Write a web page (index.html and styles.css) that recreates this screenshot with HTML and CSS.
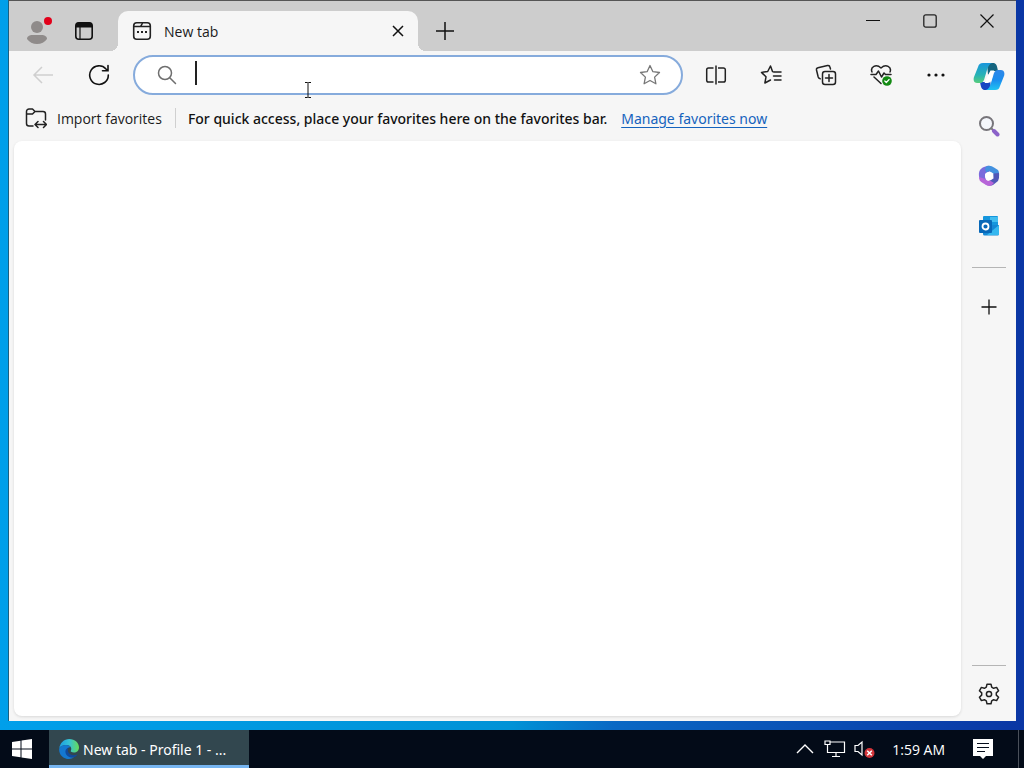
FILE: index.html
```html
<!DOCTYPE html>
<html lang="en">
<head>
  <meta charset="UTF-8" />
  <meta name="viewport" content="width=device-width, initial-scale=1.0"/>
  <title>New tab</title>
  <link rel="stylesheet" href="styles.css">
</head>
<body>
  <div class="desktop">
    <div class="window">
      <header class="tab-strip">
        <button class="strip-btn profile" aria-label="Profile">
          <svg width="28" height="28" viewBox="0 0 28 28">
            <circle cx="13" cy="10" r="6" fill="#8f8b8a"/>
            <path d="M3 22c0-3 3-4 5-4h10c2 0 5 1 5 4-2 3-6 5-10 5s-8-2-10-5z" fill="#8f8b8a"/>
            <circle cx="24" cy="4" r="4" fill="#e2001a"/>
          </svg>
        </button>
        <button class="strip-btn" aria-label="Tab actions">
          <svg width="20" height="20" viewBox="0 0 20 20">
            <rect x="1.8" y="1.8" width="16.4" height="16.4" rx="3" fill="none" stroke="#111" stroke-width="1.6"/>
            <path d="M2 6.5V4a2.5 2.5 0 0 1 2.5-2.5h11A2.5 2.5 0 0 1 18 4v2.5z" fill="#111"/>
            <path d="M6 6v12" stroke="#111" stroke-width="1.2"/>
          </svg>
        </button>
        <div class="tab">
          <svg width="20" height="20" viewBox="0 0 20 20" fill="none" stroke="#222" stroke-width="1.6">
            <rect x="1.7" y="1.7" width="16.6" height="16.6" rx="3"/>
            <path d="M2 5.5h6c2 0 1.5-3.5 3-3.5M8 5.5h10"/>
            <path d="M5 11h2M9 11h2M13 11h2" stroke-width="2"/>
          </svg>
          <span class="tab-title">New tab</span>
          <button class="tab-close" aria-label="Close tab">
            <svg width="12" height="12" viewBox="0 0 12 12" stroke="#111" stroke-width="1.5"><path d="M1 1l10 10M11 1L1 11"/></svg>
          </button>
        </div>
        <button class="new-tab" aria-label="New tab">
          <svg width="18" height="18" viewBox="0 0 18 18" stroke="#111" stroke-width="1.5"><path d="M9 0v18M0 9h18"/></svg>
        </button>
        <div class="window-controls">
          <button aria-label="Minimize"><svg width="14" height="14" viewBox="0 0 14 14" stroke="#111"><path d="M0 6.5h14"/></svg></button>
          <button aria-label="Maximize"><svg width="14" height="14" viewBox="0 0 14 14" fill="none" stroke="#222" stroke-width="1.3"><rect x="0.8" y="0.8" width="12.4" height="12.4" rx="2"/></svg></button>
          <button aria-label="Close"><svg width="14" height="14" viewBox="0 0 14 14" stroke="#111" stroke-width="1.2"><path d="M0.5 0.5l13 13M13.5 0.5l-13 13"/></svg></button>
        </div>
      </header>

      <div class="content">
        <main class="main">
          <div class="toolbar">
            <button class="nav-btn" aria-label="Back" disabled>
              <svg width="22" height="20" viewBox="0 0 22 20" fill="none" stroke="#cfcfcf" stroke-width="1.5"><path d="M21 10H2.5M10 2l-8 8 8 8"/></svg>
            </button>
            <button class="nav-btn" aria-label="Refresh">
              <svg width="22" height="22" viewBox="0 0 22 22" fill="none" stroke="#111" stroke-width="1.6" stroke-linecap="round"><path d="M20.3 11A9.3 9.3 0 1 1 18 5l1.5 1.5M20 1.5v5.2h-5.5"/></svg>
            </button>
            <form class="address">
              <svg width="20" height="20" viewBox="0 0 20 20" fill="none" stroke="#6e6e6e" stroke-width="1.5" stroke-linecap="round"><circle cx="8" cy="8" r="6.5"/><path d="M13 13l5.5 5.5"/></svg>
              <span class="field">
                <input type="text" aria-label="Address and search bar">
                <span class="caret"></span>
              </span>
              <button type="button" class="star" aria-label="Add to favorites">
                <svg width="22" height="22" viewBox="0 0 22 22" fill="none" stroke="#777" stroke-width="1.3" stroke-linejoin="round"><path d="M11 1.5l2.9 6.2 6.6.8-4.9 4.6 1.3 6.7L11 16.500l-5.900 3.300 1.300-6.700-4.900-4.600 6.600-.8z"/></svg>
              </button>
            </form>
            <button class="tool-btn" aria-label="Split screen">
              <svg width="22" height="22" viewBox="0 0 22 22" fill="none" stroke="#222" stroke-width="1.5"><path d="M8.5 4H3.5A1.8 1.8 0 0 0 1.7 5.8v10.4A1.8 1.8 0 0 0 3.5 18h5M13 4h5.5a1.8 1.8 0 0 1 1.8 1.8v10.4a1.8 1.8 0 0 1-1.8 1.8H13M11 1.5v19"/></svg>
            </button>
            <button class="tool-btn" aria-label="Favorites">
              <svg width="22" height="22" viewBox="0 0 22 22" fill="none" stroke="#222" stroke-width="1.5" stroke-linejoin="round" stroke-linecap="round"><path d="M14 8l-1.5-.4L10.5 2 7.7 7.5l-6.2.9 4.5 4.4L4.900 19l5.600-3M14.500 8H21M13.500 12H21M14.500 16H21"/></svg>
            </button>
            <button class="tool-btn" aria-label="Collections">
              <svg width="22" height="22" viewBox="0 0 22 22" fill="none" stroke="#222" stroke-width="1.5" stroke-linecap="round"><path d="M15.5 5l-.6-2a2 2 0 0 0-2.4-1.5L3 3.7A2 2 0 0 0 1.5 6L3.2 13a2.5 2.5 0 0 0 2 1.8"/><rect x="7.5" y="7.5" width="13" height="13" rx="2.5"/><path d="M14 10.5v7M10.5 14h7"/></svg>
            </button>
            <button class="tool-btn" aria-label="Browser essentials">
              <svg width="22" height="22" viewBox="0 0 22 22" fill="none" stroke="#222" stroke-width="1.5" stroke-linejoin="round" stroke-linecap="round"><path d="M2 8C0 3 6-.5 11 4c5-4.5 11-1 9 4M1 10.5h5L8.5 7l3 6 2.5-4 1.5 1.5H21M4 13l7 6.5"/><circle cx="17" cy="17" r="4.8" fill="#138a13" stroke="none"/><path d="M14.8 17l1.5 1.5 2.8-3" stroke="#fff" stroke-width="1.2"/></svg>
            </button>
            <button class="tool-btn" aria-label="Settings and more">
              <svg width="18" height="4" viewBox="0 0 18 4" fill="#111"><circle cx="2" cy="2" r="1.6"/><circle cx="9" cy="2" r="1.6"/><circle cx="16" cy="2" r="1.6"/></svg>
            </button>
          </div>

          <div class="favorites-bar">
            <button class="import-btn">
              <svg width="22" height="22" viewBox="0 0 22 22" fill="none" stroke="#222" stroke-width="1.5" stroke-linejoin="round" stroke-linecap="round"><path d="M8 19H4a2.5 2.5 0 0 1-2.5-2.5v-12A2.5 2.5 0 0 1 4 2h3.5L10 4.5h8A2.5 2.5 0 0 1 20.5 7v6M1.5 7h6L10 4.5M10.5 17.5H21M13 14.5l-3 3 3 3M18.5 14.5l3 3-3 3"/></svg>
              <span>Import favorites</span>
            </button>
            <p class="hint">For quick access, place your favorites here on the favorites bar.</p>
            <a href="#">Manage favorites now</a>
          </div>

          <div class="page"></div>
        </main>

        <aside class="sidebar">
          <button aria-label="Copilot">
            <svg width="32" height="29" viewBox="0 0 32 29">
              <defs>
                <linearGradient id="cp-left" x1="0" y1="0" x2="0" y2="1"><stop offset="0" stop-color="#1a96dc"/><stop offset="0.6" stop-color="#27b3b5"/><stop offset="1" stop-color="#58cd7c"/></linearGradient>
                <linearGradient id="cp-right" x1="0" y1="0" x2="0" y2="1"><stop offset="0" stop-color="#2f87e8"/><stop offset="0.5" stop-color="#1b8dee"/><stop offset="1" stop-color="#20c4f2"/></linearGradient>
              </defs>
              <path d="M14 1h6c3 0 4 2 5 8h-5c-2 0-3 1-5 4z" fill="#15657f"/>
              <path d="M18 28h-6c-3 0-4-2-5-8h5c2 0 3-1 5-4z" fill="#1747c2"/>
              <path d="M10 1h9c-3 1-4 4-5 7l-3 10c-1 2-2 3-4 3H4c-3 0-4-3-3-6l4-10c1-3 2-4 5-4z" fill="url(#cp-left)"/>
              <path d="M22 28h-9c3-1 4-4 5-7l3-10c1-2 2-3 4-3h3c3 0 4 3 3 6l-4 10c-1 3-2 4-5 4z" fill="url(#cp-right)"/>
              <path d="M17.5 8.5h3.5L18.5 18q-1 3-4 3h-3z" fill="#fff"/>
            </svg>
          </button>
          <button aria-label="Search">
            <svg width="22" height="22" viewBox="0 0 22 22" fill="none"><circle cx="8.5" cy="8.5" r="6.5" fill="#f4f6fb" stroke="#77757a" stroke-width="2"/><path d="M13.5 13.5l3 3" stroke="#77757a" stroke-width="2"/><path d="M16 16l3.5 3.5" stroke="#8b62c9" stroke-width="4" stroke-linecap="round"/></svg>
          </button>
          <button aria-label="Microsoft 365">
            <svg width="22" height="22" viewBox="0 0 22 22">
              <path d="M9 1Q4 2 2 5 0 8 1.5 13.5L8 15 7 9l5-3 1-4.5Q11 .5 9 1z" fill="#7a6bdc"/>
              <path d="M9 1q4-1 7 1.5l4 2.5Q21.5 7 21 12l-5 1-.5-4.5L11 6 8 7.5 7 3z" fill="#4391df"/>
              <path d="M21 8q.5 5-1 8l-5 4q-4 1.5-8-1l5-3.5 3.5-2V8.5z" fill="#5058b8"/>
              <path d="M1 12q0 4 3 5.5L9 20.5q3 1 5-.5l2-2-4-2.5-2 .5-4-2.5z" fill="#b765d8"/>
              <circle cx="11" cy="11" r="4" fill="#fff"/>
            </svg>
          </button>
          <button aria-label="Outlook">
            <svg width="22" height="22" viewBox="0 0 22 22">
              <rect x="5" y="1" width="15" height="10" rx="1" fill="#1596dd"/>
              <path d="M12 2h8v5h-8z" fill="#42bdf0"/>
              <path d="M5 10h16v9q0 1.5-1.5 1.5h-13Q5 20.5 5 19z" fill="#1487d4"/>
              <path d="M21 10v10H9z" fill="#35b7ef"/>
              <rect x="1" y="5" width="13" height="13" rx="1" fill="#0868b8"/>
              <circle cx="7.5" cy="11.5" r="3" fill="none" stroke="#fff" stroke-width="1.8"/>
            </svg>
          </button>
          <hr>
          <button aria-label="Customize sidebar">
            <svg width="16" height="16" viewBox="0 0 16 16" stroke="#111" stroke-width="1.3"><path d="M8 .5v15M.5 8h15"/></svg>
          </button>
          <hr class="bottom-line">
          <button aria-label="Settings">
            <svg width="22" height="22" viewBox="0 0 22 22" fill="none" stroke="#222" stroke-width="1.5" stroke-linejoin="round"><path d="M9 1.2h4l.7 3 1.9 1.1 3-.9 2 3.4-2.3 2.1v2.2l2.3 2.1-2 3.4-3-.9-1.9 1.1-.7 3H9l-.7-3-1.9-1.1-3 .9-2-3.4 2.3-2.1V9.900L1.400 7.800l2-3.400 3 .9 1.900-1.100z"/><circle cx="11" cy="11" r="2.6"/></svg>
          </button>
        </aside>
      </div>
    </div>
  </div>

  <footer class="taskbar">
    <button class="start" aria-label="Start">
      <svg width="20" height="20" viewBox="0 0 20 20" fill="#fff"><path d="M0 3l8.5-1.2v7.7H0zM9.5 1.6L20 0v9.5H9.500zM0 10.500h8.500v7.700L0 17zM9.500 10.500H20V20L9.500 18.400z"/></svg>
    </button>
    <button class="task">
      <svg width="20" height="20" viewBox="0 0 20 20">
        <defs>
          <linearGradient id="edge-top" x1="0" y1="0.5" x2="1" y2="0.5"><stop offset="0" stop-color="#1b9de2"/><stop offset="0.5" stop-color="#35c1d6"/><stop offset="1" stop-color="#66dc58"/></linearGradient>
        </defs>
        <path d="M.2 9.5C1 4 5 0 10.2 0 16 0 20 4 20 8.5c0 3-2.3 5-5 5-2.5 0-4-.9-3-2.2C13.2 9 11 6 7.5 6 4 6 1 7.5.2 9.5z" fill="url(#edge-top)"/>
        <path d="M.2 9.5C1.5 7 4 6 7 6c2 0 3.8.8 4.7 2-3 .3-4.7 2.5-4.3 5 .5 3.5 4 5.5 7.6 5.3C13.5 19.5 12 20 10 20 4 20-.5 15 .2 9.5z" fill="#1478d0"/>
        <path d="M9.5 8.6c-2.5 1-3.5 3-3 5.2.7 3.2 4 5 7.5 4.7 2-.3 3.5-1.5 4.5-3-4 1.5-8.5.5-9.5-3-.3-1.5 0-2.8.5-3.9z" fill="#114a9c"/>
      </svg>
      <span>New tab - Profile 1 - ...</span>
    </button>
    <div class="tray">
      <button aria-label="Show hidden icons">
        <svg width="18" height="10" viewBox="0 0 18 10" fill="none" stroke="#fff" stroke-width="1.4"><path d="M1 9l8-8 8 8"/></svg>
      </button>
      <button aria-label="Network">
        <svg width="22" height="18" viewBox="0 0 22 18" fill="none" stroke="#fff" stroke-width="1.2"><path d="M6 2h14.5v10.5h-17V7M12 12.5V16M8 16.5h8"/><path d="M1 1h5v3.5H1zM3.5 4.5V7"/></svg>
      </button>
      <button aria-label="Volume muted">
        <svg width="22" height="18" viewBox="0 0 22 18" fill="none" stroke="#fff" stroke-width="1.2"><path d="M1 5.5h3L8 2v13l-4-3.5H1z"/><circle cx="15.5" cy="13" r="5" fill="#d3353a" stroke="none"/><path d="M13.2 10.7l4.6 4.6M17.8 10.7l-4.6 4.6" stroke-width="1.5"/></svg>
      </button>
      <time class="clock">1:59 AM</time>
      <button class="notifications" aria-label="Notifications">
        <svg width="20" height="20" viewBox="0 0 20 20"><path d="M0 0h20v17h-7l-3 3-3-3H0z" fill="#fff"/><path d="M4 4.5h12M4 8.5h12M4 12.5h8" stroke="#050d1c" stroke-width="1.2"/></svg>
      </button>
      <span class="show-desktop"></span>
    </div>
  </footer>

  <svg class="pointer" width="8" height="16" viewBox="0 0 8 16" fill="none" stroke="#111"><path d="M1 .5h2.500l.5.5.5-.5H7M4 1v14M1 15.500h2.500l.5-.5.5.5H7"/></svg>
</body>
</html>
```
FILE: styles.css
```css
* {
  box-sizing: border-box;
}
body {
  margin: 0;
  min-height: 100vh;
  display: flex;
  flex-direction: column;
  font-family: "Open Sans", "Noto Sans", sans-serif;
  font-size: 14px;
  color: #1b1b1b;
}
button {
  display: flex;
  align-items: center;
  justify-content: center;
  padding: 0;
  border: none;
  background: none;
  font: inherit;
  color: inherit;
}
svg {
  display: block;
  flex-shrink: 0;
}

.desktop {
  flex: 1;
  display: flex;
  padding: 0 8px 9px;
  background: linear-gradient(90deg, #009fea, #0092d6 50%, #0a68c4 60%, #0a36a4);
}
.window {
  flex: 1;
  display: flex;
  flex-direction: column;
  background: #f6f6f6;
  border-top: 1px solid #555;
  border-left: 1px solid #1c5f80;
}

/* tab strip */
.tab-strip {
  display: flex;
  align-items: flex-end;
  height: 50px;
  padding: 0 1px 0 6px;
  background: #cdcdcd;
}
.strip-btn {
  width: 46px;
  height: 40px;
}
.tab {
  position: relative;
  display: flex;
  align-items: center;
  width: 300px;
  height: 40px;
  margin-left: 11px;
  padding: 0 10px 0 14px;
  background: #f6f6f6;
  border-radius: 10px 10px 0 0;
}
.tab::before,
.tab::after {
  content: "";
  position: absolute;
  bottom: 0;
  width: 8px;
  height: 8px;
}
.tab::before {
  left: -8px;
  background: radial-gradient(circle at 0 0, #cdcdcd 8px, #f6f6f6 8px);
}
.tab::after {
  right: -8px;
  background: radial-gradient(circle at 100% 0, #cdcdcd 8px, #f6f6f6 8px);
}
.tab-title {
  flex: 1;
  margin-left: 12px;
}
.tab-close {
  width: 20px;
  height: 20px;
}
.new-tab {
  width: 54px;
  height: 40px;
}
.window-controls {
  display: flex;
  align-self: flex-start;
  margin-left: auto;
}
.window-controls button {
  width: 57px;
  height: 40px;
}

.content {
  flex: 1;
  display: flex;
}
.main {
  flex: 1;
  display: flex;
  flex-direction: column;
}

/* toolbar */
.toolbar {
  display: flex;
  align-items: center;
  height: 48px;
  padding-left: 6px;
}
.nav-btn {
  width: 56px;
  height: 40px;
}
.tool-btn {
  width: 55px;
  height: 40px;
}
.address {
  flex: 1;
  display: flex;
  align-items: center;
  height: 40px;
  margin: 0 5px 0 6px;
  padding: 0 20px 0 22px;
  background: #fff;
  border: 2px solid #86abdc;
  border-radius: 20px;
}
.field {
  position: relative;
  flex: 1;
  display: flex;
  margin: 0 12px 0 18px;
}
.field input {
  flex: 1;
  height: 28px;
  padding: 0;
  border: none;
  outline: none;
  background: none;
  font: inherit;
}
.caret {
  position: absolute;
  left: 0;
  top: 0;
  width: 2px;
  height: 24px;
  background: #222;
}

/* favorites bar */
.favorites-bar {
  display: flex;
  align-items: center;
  height: 38px;
  padding-left: 16px;
}
.import-btn {
  gap: 10px;
  height: 20px;
  padding-right: 13px;
  border-right: 1px solid #d0d0d0;
}
.hint {
  margin: 0 14px 0 12px;
  font-family: "Noto Sans", "Open Sans", sans-serif;
  font-weight: 500;
  color: #111;
}
.favorites-bar a {
  font-family: "Noto Sans", "Open Sans", sans-serif;
  color: #1563bd;
  text-underline-offset: 3px;
}

.page {
  flex: 1;
  margin: 4px 2px 5px 5px;
  background: #fff;
  border-radius: 8px;
  box-shadow: 0 1px 3px rgba(0,0,0,0.12);
}

/* sidebar */
.sidebar {
  display: flex;
  flex-direction: column;
  align-items: center;
  width: 53px;
  padding: 0 1px 2px 0;
}
.sidebar button {
  width: 50px;
  height: 50px;
}
.sidebar hr {
  width: 34px;
  height: 1px;
  margin: 16px 0 14px;
  border: none;
  background: #b5b5b5;
}
.sidebar .bottom-line {
  margin: auto 0 3px;
}

/* taskbar */
.taskbar {
  display: flex;
  height: 38px;
  background: #030b18;
  color: #fff;
}
.start {
  width: 49px;
  padding-right: 6px;
}
.task {
  justify-content: flex-start;
  gap: 4px;
  width: 200px;
  padding: 3px 0 0 10px;
  background: #32474f;
  border-bottom: 3px solid #76b5f0;
  font-family: "Noto Sans", "Open Sans", sans-serif;
}
.tray {
  display: flex;
  align-items: center;
  margin-left: auto;
}
.tray button {
  width: 30px;
  height: 38px;
}
.clock {
  margin: 0 12px;
}
.tray .notifications {
  width: 52px;
}
.show-desktop {
  width: 6px;
  height: 38px;
  margin-left: 9px;
  border-left: 1px solid #4a505a;
}

.pointer {
  position: absolute;
  left: 304px;
  top: 82px;
}
```
